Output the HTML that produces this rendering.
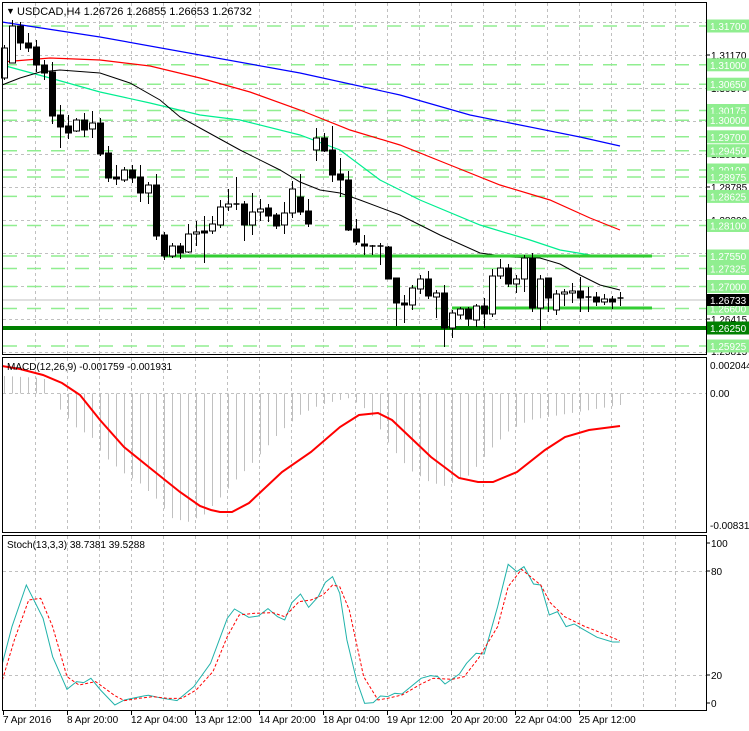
<!DOCTYPE html>
<html><head><meta charset="utf-8"><style>
html,body{margin:0;padding:0;background:#fff;}
svg{display:block;font-family:"Liberation Sans",sans-serif;}
</style></head><body>
<svg id="s" width="749" height="731" viewBox="0 0 749 731" xmlns="http://www.w3.org/2000/svg">
<rect width="749" height="731" fill="#fff"/>
<g id="grid" stroke="#c0c0c0" stroke-dasharray="3 3" stroke-width="1"></g>
<g id="glines"></g>
<polyline fill="none" stroke="#0000ff" stroke-width="1.2" points="2,22 100,37 200,55 300,73 400,95 470,115 520,125 580,137 620,146"/>
<polyline fill="none" stroke="#ff0000" stroke-width="1.2" points="2,62 50,58 100,60 150,66 200,78 250,92 300,110 350,130 400,145 450,165 500,185 550,200 590,218 620,230"/>
<polyline fill="none" stroke="#00ee90" stroke-width="1.2" points="2,65 50,78 100,92 150,103 200,115 240,120 300,135 340,150 380,180 420,200 480,225 530,240 560,250 590,255"/>
<polyline fill="none" stroke="#000" stroke-width="1" points="2,85 20,78 40,72 60,70 100,73 130,83 160,100 180,117 200,128 240,150 280,170 300,182 320,190 340,193 360,200 400,215 440,235 480,253 510,257 540,258 560,264 580,275 600,285 620,290"/>
<line x1="2" y1="300" x2="706" y2="300" stroke="#c0c0c0"/>
<line x1="163" y1="256" x2="652" y2="256" stroke="#32cd32" stroke-width="3"/>
<line x1="452" y1="308" x2="652" y2="308" stroke="#32cd32" stroke-width="3"/>
<line x1="2" y1="328" x2="706" y2="328" stroke="#008000" stroke-width="4"/>
<g id="candles"></g>
<g id="hist" stroke="#c0c0c0" stroke-width="1"></g>
<polyline fill="none" stroke="#ff0000" stroke-width="2" points="2,366 20,369 43,375 62,383 80,395 100,420 124,447 150,468 180,492 200,506 211,510 220,512 232,512 249,503 282,472 311,452 340,427 359,415 378,413 392,420 411,438 431,457 459,478 478,482 493,482 517,472 545,450 565,437 589,430 620,426"/>
<g transform="translate(0,530) scale(0.4785,0.3333)">
<polyline fill="none" stroke="#20b2aa" stroke-width="1" vector-effect="non-scaling-stroke" points="5,400 25,290 55,165 90,265 110,380 140,478 160,455 175,458 190,445 210,480 240,525 260,510 300,498 310,496 340,505 370,512 405,470 440,400 475,265 490,237 520,262 540,258 560,236 580,260 595,270 610,218 628,192 645,232 665,200 680,157 695,140 710,190 725,330 745,450 762,520 780,518 795,498 810,500 825,490 840,492 880,445 900,437 915,440 930,462 960,432 975,400 995,370 1012,372 1040,230 1062,103 1080,125 1095,110 1115,162 1130,165 1148,255 1165,245 1183,290 1200,282 1215,295 1248,322 1280,336 1295,336"/>
<polyline fill="none" stroke="#ff0000" stroke-width="1" stroke-dasharray="3 2" vector-effect="non-scaling-stroke" points="5,450 30,330 60,210 85,205 110,290 140,440 165,465 200,455 240,497 260,512 290,505 320,500 350,505 380,505 410,480 445,425 475,320 500,255 530,250 570,248 595,260 625,215 650,210 675,195 695,165 710,170 730,240 760,440 790,510 810,505 840,495 880,462 905,445 945,448 970,440 1000,385 1040,290 1062,170 1090,118 1130,165 1150,218 1180,260 1220,288 1250,305 1295,332"/>
</g>
<g fill="none" stroke="#000" stroke-width="1">
<rect x="2.5" y="2.5" width="704" height="352"/>
<rect x="2.5" y="357.5" width="704" height="175"/>
<rect x="2.5" y="535.5" width="704" height="175"/>
</g>
<g id="axis" font-size="10" fill="#000"></g>
<g font-size="11" fill="#000">
<text x="6" y="14" font-size="9">▼</text>
<text x="17" y="15">USDCAD,H4  1.26726 1.26855 1.26653 1.26732</text>
<text x="7" y="370" font-size="10">MACD(12,26,9) -0.001759 -0.001931</text>
<text x="7" y="548" font-size="10">Stoch(13,3,3) 38.7381 39.5288</text>
</g>
</svg>
<script>
var NS="http://www.w3.org/2000/svg";
function el(p,t,a,txt){var e=document.createElementNS(NS,t);for(var k in a)e.setAttribute(k,a[k]);if(txt!=null)e.textContent=txt;document.getElementById(p).appendChild(e);return e;}
for(var x=35.5;x<706;x+=32){el('grid','line',{x1:x,y1:3,x2:x,y2:354});el('grid','line',{x1:x,y1:358,x2:x,y2:532});el('grid','line',{x1:x,y1:536,x2:x,y2:710});}
for(var y=22.5;y<354;y+=33){el('grid','line',{x1:3,y1:y,x2:706,y2:y});}
el('grid','line',{x1:3,y1:393.5,x2:706,y2:393.5});
[571.5,675.5].forEach(function(y){el('grid','line',{x1:3,y1:y,x2:706,y2:y});});
var lv=[["1.31700",26],["1.31000",64.8],["1.30650",84.2],["1.30175",110.5],["1.30000",120.2],["1.29700",136.8],["1.29450",150.7],["1.29100",170],["1.28975",177],["1.28625",196.4],["1.28100",225.5],["1.27550",256],["1.27325",268.5],["1.27000",286.5],["1.26600",308.5],["1.26250",328],["1.25925",346]];
lv.forEach(function(l){el('glines','line',{x1:3,y1:l[1],x2:706,y2:l[1],stroke:"#90ee90","stroke-width":1.5,"stroke-dasharray":"14 10"});});
var ga=[["1.31170",55],["1.30570",88],["1.29385",154],["1.28785",187],["1.28200",220],["1.26415",319],["1.25815",351]];
ga.forEach(function(g){el('axis','line',{x1:706,y1:g[1],x2:710,y2:g[1],stroke:"#000"});el('axis','text',{x:711,y:g[1]+4},g[0]);});
lv.forEach(function(l){var dark=l[0]=="1.26250";el('axis','rect',{x:707,y:l[1]-6.5,width:42,height:13,fill:dark?"#008000":"#90ee90"});el('axis','text',{x:710,y:l[1]+4,fill:"#fff"},l[0]);});
el('axis','rect',{x:707,y:294,width:42,height:12,fill:"#000"});el('axis','text',{x:710,y:304,fill:"#fff"},"1.26733");
[["0.002044",369],["0.00",397],["-0.008316",529]].forEach(function(g){el('axis','text',{x:710,y:g[1]},g[0]);});
[["100",547],["80",575],["20",679],["0",707]].forEach(function(g){el('axis','line',{x1:706,y1:g[1]-4,x2:710,y2:g[1]-4,stroke:"#000"});el('axis','text',{x:711,y:g[1]},g[0]);});
var tl=["7 Apr 2016","8 Apr 20:00","12 Apr 04:00","13 Apr 12:00","14 Apr 20:00","18 Apr 04:00","19 Apr 12:00","20 Apr 20:00","22 Apr 04:00","25 Apr 12:00"];
tl.forEach(function(t,i){var x=3.5+64*i;el('axis','line',{x1:x,y1:711,x2:x,y2:715,stroke:"#000"});el('axis','text',{x:3+64*i,y:723},t);});
var C=[[78,48,45,80],[63,26,20,63],[26,43,22,50],[43,48,33,52],[47,65,40,72],[65,73,60,80],[72,116,62,124],[115,127,105,148],[126,133,115,139],[131,120,118,132],[120,130,113,137],[129,123,111,138],[123,154,118,156],[153,178,146,182],[177,179,165,185],[180,170,167,182],[170,178,165,183],[177,193,165,202],[193,185,182,204],[185,236,174,240],[235,256,232,260],[256,246,243,258],[246,253,243,259],[252,234,224,253],[234,232,221,246],[231,233,216,263],[231,224,216,234],[225,207,200,228],[207,204,189,211],[205,204,177,210],[204,225,201,241],[225,212,193,235],[212,209,199,221],[208,216,204,222],[215,226,213,229],[225,213,202,234],[213,189,181,218],[197,212,174,215],[211,224,199,227],[150,138,128,161],[138,151,133,152],[150,175,126,182],[174,180,158,197],[180,230,171,231],[229,242,219,245],[244,246,235,255],[246,247,245,255],[246,247,243,265],[247,279,246,279],[278,303,278,326],[303,305,295,323],[305,288,285,310],[289,279,275,294],[279,296,271,299],[297,293,290,318],[293,328,285,347],[328,313,310,338],[315,309,307,319],[309,319,307,326],[320,306,304,327],[306,314,298,328],[314,276,269,317],[276,268,259,279],[268,284,264,287],[284,279,275,293],[279,258,255,292],[258,308,253,312],[308,279,275,330],[278,298,278,312],[310,294,290,315],[294,292,289,306],[293,291,283,303],[291,298,277,312],[297,298,287,312],[297,302,292,306],[302,299,294,305],[299,302,296,309],[298,299,292,306]];
C.forEach(function(c,i){var x=4.5+8*i;var o=c[0],cl=c[1],top=Math.min(o,cl),bot=Math.max(o,cl);
el('candles','line',{x1:x,y1:c[2],x2:x,y2:c[3],stroke:"#000"});
var bull=cl<o;if(bot-top<1.5){el('candles','line',{x1:x-3,y1:top,x2:x+3,y2:top,stroke:"#000","stroke-width":1.5});}
else el('candles','rect',{x:x-3,y:top,width:6,height:bot-top,fill:bull?"#fff":"#000",stroke:"#000"});});
var H=[[4,376],[44,378],[52,393],[60,409],[76,427],[92,437],[100,450],[108,459],[124,473],[140,483],[156,498],[172,518],[188,522],[204,515],[220,498],[236,480],[260,455],[280,432],[300,415],[320,405],[340,400],[350,398],[370,412],[390,445],[410,470],[430,482],[445,486],[470,475],[490,450],[510,430],[530,420],[560,415],[590,410],[620,405]];
function hv(x){for(var i=0;i<H.length-1;i++){if(x>=H[i][0]&&x<=H[i+1][0]){var t=(x-H[i][0])/(H[i+1][0]-H[i][0]);return H[i][1]+t*(H[i+1][1]-H[i][1]);}}return 405;}
for(var i=0;i<78;i++){var x=4.5+8*i;el('hist','line',{x1:x,y1:393.5,x2:x,y2:hv(x)});}
</script>
</body></html>
